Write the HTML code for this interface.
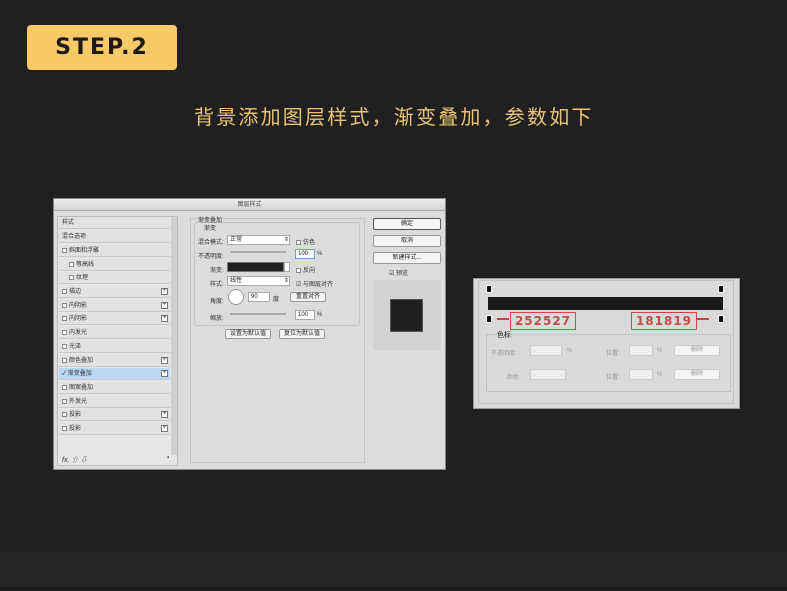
<!DOCTYPE html>
<html><head><meta charset="utf-8"><style>
*{margin:0;padding:0;box-sizing:border-box}
body{width:787px;height:591px;background:#202020;position:relative;overflow:hidden;font-family:"Liberation Sans","Noto Sans CJK SC",sans-serif}
.a{position:absolute}
.t{font-size:6px;color:#333;white-space:nowrap}
.row{position:absolute;left:59px;width:111px;height:12px;border-bottom:1px solid #c8c8c8;background:#e2e2e2;font-size:6px;color:#333;line-height:12px;padding-left:3px}
.cb{display:inline-block;width:5px;height:5px;border:1px solid #888;background:#fff;margin-right:2px;vertical-align:-1px}
.plus{position:absolute;right:2px;top:2px;width:7px;height:7px;border:1px solid #777;font-size:6px;line-height:5px;text-align:center;background:#fff}
.btn{position:absolute;background:#f4f4f4;border:1px solid #999;border-radius:2px;font-size:6px;color:#222;text-align:center}
.fld{position:absolute;background:#fff;border:1px solid #aaa;font-size:6px;color:#222;padding-left:2px;line-height:8px}
</style></head><body>
<div class="a" style="left:0;top:552px;width:787px;height:35px;background:#262626"></div>
<div class="a" style="left:0;top:587px;width:787px;height:4px;background:#1a1a1a"></div>

<div class="a" style="left:27px;top:25px;width:150px;height:45px;background:#f7c967;border-radius:4px;font-weight:bold;font-size:22px;letter-spacing:2px;color:#1d1914;text-align:center;line-height:45px;font-family:'DejaVu Sans','Liberation Sans',sans-serif">STEP.2</div>
<div class="a" style="left:194px;top:101px;font-size:20px;letter-spacing:2.2px;color:#e9c478;white-space:nowrap">背景添加图层样式，渐变叠加，参数如下</div>

<!-- dialog -->
<div class="a" style="left:53px;top:198px;width:393px;height:272px;background:#dcdcdc;border:1px solid #888"></div>
<div class="a" style="left:54px;top:199px;width:391px;height:12px;background:linear-gradient(#ececec,#d4d4d4);border-bottom:1px solid #aaa;font-size:6px;text-align:center;line-height:12px;color:#444">图层样式</div>
<div class="a" style="left:57px;top:216px;width:121px;height:250px;background:#e6e6e6;border:1px solid #bbb"></div>
<div class="a" style="left:171px;top:217px;width:6px;height:238px;background:#d0d0d0"></div>
<div class="row" style="top:217px">样式</div>
<div class="row" style="top:231px">混合选项</div>
<div class="row" style="top:245px"><span class="cb"></span>斜面和浮雕</div>
<div class="row" style="top:259px;padding-left:10px"><span class="cb"></span>等高线</div>
<div class="row" style="top:272px;padding-left:10px"><span class="cb"></span>纹理</div>
<div class="row" style="top:286px"><span class="cb"></span>描边<span class="plus">+</span></div>
<div class="row" style="top:300px"><span class="cb"></span>内阴影<span class="plus">+</span></div>
<div class="row" style="top:313px"><span class="cb"></span>内阴影<span class="plus">+</span></div>
<div class="row" style="top:327px"><span class="cb"></span>内发光</div>
<div class="row" style="top:341px"><span class="cb"></span>光泽</div>
<div class="row" style="top:355px"><span class="cb"></span>颜色叠加<span class="plus">+</span></div>
<div class="row" style="top:368px;background:#b9d8f5">✓ 渐变叠加<span class="plus">+</span></div>
<div class="row" style="top:382px"><span class="cb"></span>图案叠加</div>
<div class="row" style="top:396px"><span class="cb"></span>外发光</div>
<div class="row" style="top:409px"><span class="cb"></span>投影<span class="plus">+</span></div>
<div class="row" style="top:423px"><span class="cb"></span>投影<span class="plus">+</span></div>
<div class="a t" style="left:62px;top:455px;font-style:italic;font-size:7px">fx. ⇧ ⇩</div>
<div class="a t" style="left:167px;top:455px">▪</div>

<div class="a" style="left:190px;top:218px;width:175px;height:245px;border:1px solid #c4c4c4"></div>
<div class="a" style="left:194px;top:222px;width:166px;height:104px;border:1px solid #c4c4c4;border-radius:3px"></div>
<div class="a t" style="left:198px;top:215px">渐变叠加</div>
<div class="a t" style="left:204px;top:223px">渐变</div>
<div class="a t" style="left:198px;top:237px">混合模式:</div>
<div class="fld" style="left:227px;top:235px;width:63px;height:10px">正常 <span style="float:right">⇕</span></div>
<div class="a t" style="left:296px;top:237px"><span class="cb"></span>仿色</div>
<div class="a t" style="left:198px;top:251px">不透明度:</div>
<div class="a" style="left:230px;top:251px;width:56px;height:2px;background:#aaa"></div>
<div class="fld" style="left:295px;top:249px;width:20px;height:10px;border-color:#6aa0dd">100</div>
<div class="a t" style="left:317px;top:251px">%</div>
<div class="a t" style="left:210px;top:265px">渐变:</div>
<div class="a" style="left:227px;top:262px;width:57px;height:10px;background:#1e1e1e;border:1px solid #777"></div>
<div class="fld" style="left:284px;top:262px;width:6px;height:10px"></div>
<div class="a t" style="left:296px;top:265px"><span class="cb"></span>反向</div>
<div class="a t" style="left:210px;top:279px">样式:</div>
<div class="fld" style="left:227px;top:276px;width:63px;height:10px">线性 <span style="float:right">⇕</span></div>
<div class="a t" style="left:296px;top:279px">☑ 与图层对齐</div>
<div class="a t" style="left:210px;top:296px">角度:</div>
<div class="a" style="left:228px;top:289px;width:16px;height:16px;border-radius:50%;background:#fff;border:1px solid #999"></div>
<div class="fld" style="left:248px;top:292px;width:22px;height:10px">90</div>
<div class="a t" style="left:273px;top:294px">度</div>
<div class="btn" style="left:290px;top:292px;width:36px;height:10px;line-height:8px">重置对齐</div>
<div class="a t" style="left:210px;top:313px">缩放:</div>
<div class="a" style="left:230px;top:313px;width:56px;height:2px;background:#aaa"></div>
<div class="fld" style="left:295px;top:310px;width:20px;height:10px">100</div>
<div class="a t" style="left:317px;top:312px">%</div>
<div class="btn" style="left:225px;top:329px;width:46px;height:10px;line-height:8px">设置为默认值</div>
<div class="btn" style="left:279px;top:329px;width:46px;height:10px;line-height:8px">复位为默认值</div>

<div class="btn" style="left:373px;top:218px;width:68px;height:12px;line-height:10px;border-color:#555">确定</div>
<div class="btn" style="left:373px;top:235px;width:68px;height:12px;line-height:10px">取消</div>
<div class="btn" style="left:373px;top:252px;width:68px;height:12px;line-height:10px">新建样式...</div>
<div class="a t" style="left:389px;top:268px">☑ 预览</div>
<div class="a" style="left:373px;top:280px;width:68px;height:70px;background:#d2d2d2"></div>
<div class="a" style="left:390px;top:299px;width:33px;height:33px;background:#1f1f1f;border:1px solid #555"></div>

<!-- gradient editor -->
<div class="a" style="left:473px;top:278px;width:267px;height:131px;background:#dadada;border:1px solid #999"></div>
<div class="a" style="left:478px;top:280px;width:256px;height:124px;border:1px solid #c2c2c2"></div>
<div class="a" style="left:486px;top:285px;width:6px;height:8px;background:#111;border:1px solid #fff"></div>
<div class="a" style="left:718px;top:285px;width:6px;height:8px;background:#111;border:1px solid #fff"></div>
<div class="a" style="left:488px;top:297px;width:235px;height:13px;background:#1a1a1a"></div>
<div class="a" style="left:486px;top:315px;width:6px;height:8px;background:#111;border:1px solid #fff"></div>
<div class="a" style="left:718px;top:315px;width:6px;height:8px;background:#111;border:1px solid #fff"></div>
<div class="a" style="left:497px;top:318px;width:12px;height:2px;background:#d04040"></div>
<div class="a" style="left:697px;top:318px;width:12px;height:2px;background:#d04040"></div>
<div class="a" style="left:510px;top:312px;width:66px;height:18px;border:1px solid #d04848;color:#c84848;font-size:12px;font-weight:bold;text-align:center;line-height:16px;font-family:'DejaVu Sans',sans-serif;letter-spacing:1px">252527</div>
<div class="a" style="left:631px;top:312px;width:66px;height:18px;border:1px solid #d04848;color:#c84848;font-size:12px;font-weight:bold;text-align:center;line-height:16px;font-family:'DejaVu Sans',sans-serif;letter-spacing:1px">181819</div>
<div class="a" style="left:486px;top:334px;width:245px;height:58px;border:1px solid #c2c2c2"></div>
<div class="a t" style="left:497px;top:330px;font-size:7px;color:#222">色标</div>
<div class="a t" style="left:491px;top:348px;color:#999">不透明度:</div>
<div class="fld" style="left:530px;top:345px;width:32px;height:11px;background:#eee;border-color:#ccc"></div>
<div class="a t" style="left:567px;top:348px;color:#999">%</div>
<div class="a t" style="left:606px;top:348px;color:#999">位置:</div>
<div class="fld" style="left:629px;top:345px;width:24px;height:11px;background:#eee;border-color:#ccc"></div>
<div class="a t" style="left:657px;top:348px;color:#999">%</div>
<div class="btn" style="left:674px;top:345px;width:46px;height:11px;line-height:9px;color:#999;border-color:#ccc">删除</div>
<div class="a t" style="left:507px;top:372px;color:#999">颜色:</div>
<div class="fld" style="left:530px;top:369px;width:36px;height:11px;background:#eee;border-color:#ccc"></div>
<div class="a t" style="left:606px;top:372px;color:#999">位置:</div>
<div class="fld" style="left:629px;top:369px;width:24px;height:11px;background:#eee;border-color:#ccc"></div>
<div class="a t" style="left:657px;top:372px;color:#999">%</div>
<div class="btn" style="left:674px;top:369px;width:46px;height:11px;line-height:9px;color:#999;border-color:#ccc">删除</div>
</body></html>
